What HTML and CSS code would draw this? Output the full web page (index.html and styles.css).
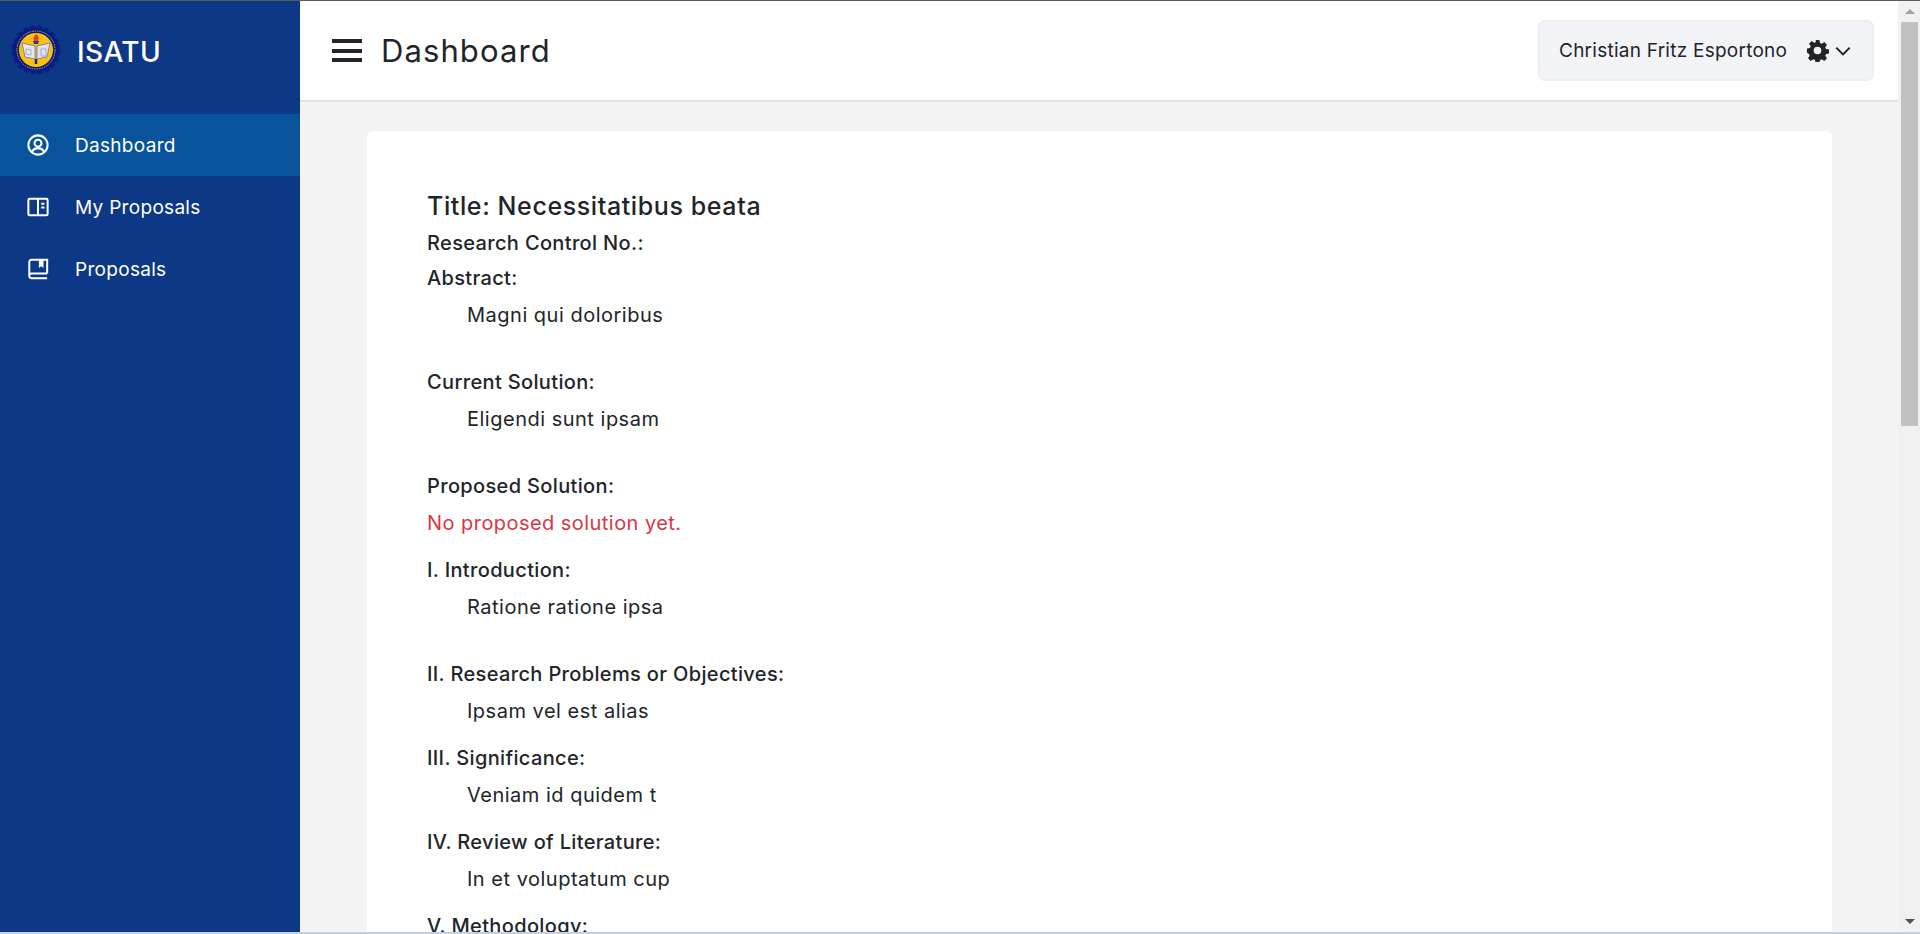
FILE: index.html
```html
<!DOCTYPE html>
<html>
<head lang="en">
    <meta charset="UTF-8">
    <title>Dashboard</title>
    <link rel="stylesheet" href="styles.css">
</head>
<body>
<div class="topline"></div>
<div class="frame">
    <div class="sidebar">
        <div class="brand">
            <svg class="logo" viewBox="0 0 50 50">
                <circle cx="25" cy="25" r="22.5" fill="#0b1f8a" stroke="#0b1f8a" stroke-width="4" stroke-dasharray="5 2.1"/>
                <circle cx="25" cy="25" r="22" fill="#0a1c80"/>
                <circle cx="25" cy="25" r="19" fill="none" stroke="#c9a93a" stroke-width="1" stroke-dasharray="1.5 1"/>
                <circle cx="25" cy="25" r="17" fill="#fcc10f"/>
                <path d="M11 18l13 3v13l-10-2z" fill="#e6e9f2" stroke="#5a66a8" stroke-width=".7"/>
                <path d="M39 18l-13 3v13l10-2z" fill="#dfe4f0" stroke="#5a66a8" stroke-width=".7"/>
                <path d="M25 34v5" stroke="#1e2a80" stroke-width="2.500"/>
                <path d="M22 16h6l-1 3h-4z" fill="#2b3a9a"/>
                <path d="M25 9c3 2 3 4 2 7h-4c-1-3 0-5 2-7z" fill="#e8401c"/>
                <path d="M30 24h5v7h-5zM15 24l5 1v5l-5-1z" fill="none" stroke="#8a93c5" stroke-width=".7"/>
            </svg>
            <span class="brand-name">ISATU</span>
        </div>
        <ul class="nav">
            <li class="nav-item active">
                <svg class="nav-icon" viewBox="0 0 24 24"><circle cx="12" cy="12" r="10.500"/><circle cx="12" cy="10" r="3.800"/><path d="M5.500 19c1.500-2.600 3.800-3.600 6.500-3.600s5 1 6.500 3.600"/></svg>
                Dashboard
            </li>
            <li class="nav-item">
                <svg class="nav-icon" viewBox="0 0 24 24"><rect x="1.500" y="3" width="21" height="18" rx="1.500"/><path d="M12 3v18M15.500 8.500h3.500M15.500 12.500h3.500"/></svg>
                My Proposals
            </li>
            <li class="nav-item">
                <svg class="nav-icon" viewBox="0 0 24 24"><path d="M22 17V2H5A2.500 2.500 0 0 0 2.500 4.500v15M22 22H5a2.500 2.500 0 0 1 0-5h17"/><path class="fill" d="M13 2h5v9l-2.500-2-2.500 2z"/></svg>
                Proposals
            </li>
        </ul>
    </div>
    <div class="main">
        <div class="header">
            <div class="burger"><span></span><span></span><span></span></div>
            <h1 class="page-title">Dashboard</h1>
            <div class="user-btn">
                <span class="user-name">Christian Fritz Esportono</span>
                <svg class="gear" viewBox="0 0 24 24"><path fill-rule="evenodd" d="M10 1h4l.6 3.100 1.900.8 2.600-1.800 2.800 2.800-1.800 2.600.8 1.900 3.100.6v4l-3.100.6-.8 1.900 1.800 2.600-2.800 2.800-2.600-1.800-1.900.8-.6 3.100h-4l-.6-3.100-1.900-.8-2.600 1.800-2.800-2.800 1.800-2.600-.8-1.900L1 14v-4l3.100-.6.8-1.900-1.800-2.600 2.800-2.800 2.600 1.800 1.900-.8zM12 8a4 4 0 1 0 0 8 4 4 0 0 0 0-8z"/></svg>
                <svg class="chevron" viewBox="0 0 16 16"><path d="M2 5l6 6 6-6"/></svg>
            </div>
        </div>
        <div class="content">
            <div class="card">
                <div class="title">Title: Necessitatibus beata</div>
                <div class="label control">Research Control No.:</div>
                <div class="label">Abstract:</div>
                <div class="value tall">Magni qui doloribus</div>
                <div class="label">Current Solution:</div>
                <div class="value tall">Eligendi sunt ipsam</div>
                <div class="label">Proposed Solution:</div>
                <div class="empty">No proposed solution yet.</div>
                <div class="label">I. Introduction:</div>
                <div class="value tall">Ratione ratione ipsa</div>
                <div class="label">II. Research Problems or Objectives:</div>
                <div class="value">Ipsam vel est alias</div>
                <div class="label">III. Significance:</div>
                <div class="value">Veniam id quidem t</div>
                <div class="label">IV. Review of Literature:</div>
                <div class="value">In et voluptatum cup</div>
                <div class="label">V. Methodology:</div>
            </div>
        </div>
    </div>
    <div class="scrollbar">
        <div class="arrow up"></div>
        <div class="thumb"></div>
        <div class="track"></div>
        <div class="arrow down"></div>
    </div>
</div>
<div class="bottomline"></div>
</body>
</html>
```

FILE: styles.css
```css
*{
    margin: 0;
    padding: 0;
    box-sizing: border-box;
}
html,body{
    height: 934px;
    overflow: hidden;
}
body{
    display: flex;
    flex-direction: column;
    font-family: Inter, "Liberation Sans", sans-serif;
    color: #212529;
    background: #f4f4f4;
}
.topline{
    height: 1px;
    background: #5a5a5a;
}
.bottomline{
    height: 2px;
    background: #c3cfe2;
}
.frame{
    flex: 1;
    display: flex;
    min-height: 0;
}

/* sidebar */
.sidebar{
    width: 300px;
    flex-shrink: 0;
    background: #0d3885;
    color: #fff;
}
.brand{
    height: 113px;
    display: flex;
    align-items: center;
    padding: 0 0 15px 11px;
}
.logo{
    width: 50px;
    height: 50px;
}
.brand-name{
    margin: 3px 0 0 16px;
    font-size: 28px;
    font-weight: 500;
    letter-spacing: .4px;
}
.nav{
    list-style: none;
}
.nav-item{
    height: 62px;
    display: flex;
    align-items: center;
    padding-left: 27px;
    font-size: 19px;
    letter-spacing: .3px;
}
.nav-item.active{
    background: #08539b;
}
.nav-icon{
    width: 22px;
    height: 22px;
    margin-right: 26px;
    fill: none;
    stroke: #fff;
    stroke-width: 2.200;
}
.nav-icon .fill{
    fill: #fff;
    stroke: none;
}

/* header */
.main{
    flex: 1;
    min-width: 0;
    display: flex;
    flex-direction: column;
}
.header{
    height: 101px;
    flex-shrink: 0;
    display: flex;
    align-items: center;
    padding: 0 24px 0 32px;
    background: #fff;
    border-bottom: 2px solid #e2e2e2;
}
.burger{
    width: 30px;
    display: flex;
    flex-direction: column;
    gap: 5.500px;
}
.burger span{
    height: 4px;
    background: #212529;
}
.page-title{
    margin-left: 19px;
    font-size: 31px;
    font-weight: 400;
    letter-spacing: 1.100px;
}
.user-btn{
    margin-left: auto;
    width: 336px;
    height: 61px;
    display: flex;
    align-items: center;
    padding-left: 19px;
    background: #f3f4f8;
    border: 2px solid #eceef2;
    border-radius: 7px;
    font-size: 19px;
    letter-spacing: .25px;
}
.gear{
    width: 23px;
    height: 23px;
    margin-left: 19px;
    fill: #212529;
}
.chevron{
    width: 18px;
    height: 18px;
    margin-left: 5px;
    fill: none;
    stroke: #212529;
    stroke-width: 1.800;
}

/* content */
.content{
    flex: 1;
    min-height: 0;
    overflow: hidden;
    padding: 29px 66px 0 67px;
}
.card{
    height: 900px;
    padding: 59px 60px;
    background: #fff;
    border-radius: 6px;
}
.title{
    font-size: 25px;
    line-height: 33px;
    font-weight: 500;
    letter-spacing: .6px;
    margin-bottom: 7px;
}
.label{
    font-size: 20px;
    line-height: 27px;
    font-weight: 500;
    letter-spacing: .35px;
    margin-bottom: 10px;
}
.label.control{
    margin-bottom: 8px;
}
.value{
    font-size: 20px;
    line-height: 27px;
    letter-spacing: .5px;
    padding-left: 40px;
    margin-bottom: 20px;
}
.value.tall{
    margin-bottom: 40px;
}
.empty{
    font-size: 20px;
    line-height: 27px;
    letter-spacing: .45px;
    color: #dc3545;
    margin-bottom: 20px;
}

/* scrollbar */
.scrollbar{
    width: 22px;
    flex-shrink: 0;
    display: flex;
    flex-direction: column;
    background: #f1f1f1;
}
.arrow{
    height: 21px;
    padding-left: 1px;
    display: flex;
    align-items: center;
    justify-content: center;
}
.arrow:before{
    content: "";
    border-left: 5px solid transparent;
    border-right: 5px solid transparent;
}
.arrow.up:before{
    border-bottom: 5px solid #a3a3a3;
}
.arrow.down:before{
    border-top: 5px solid #505050;
}
.thumb{
    height: 404px;
    margin: 0 2px 0 3px;
    background: #c1c1c1;
}
.track{
    flex: 1;
}
```
